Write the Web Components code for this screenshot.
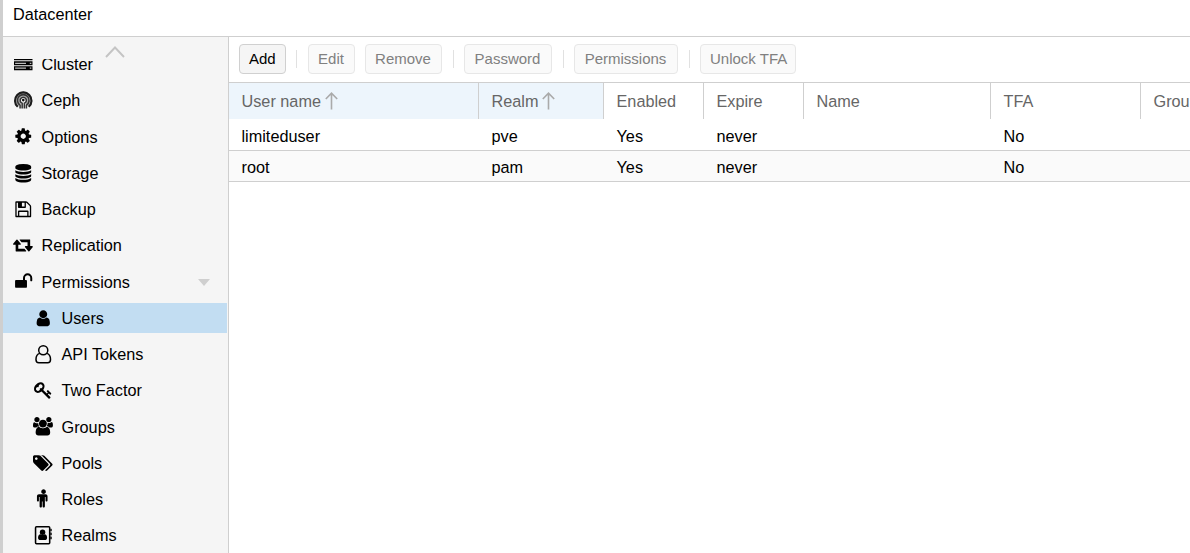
<!DOCTYPE html>
<html lang="en">
<head>
<meta charset="utf-8">
<title>Datacenter</title>
<style>
html,body{margin:0;height:100%;overflow:hidden;background:#fff}
body{font:16.25px "Liberation Sans",Arial,sans-serif;color:#000}
</style>
</head>
<body>
<dc-app></dc-app>
<script>
const ICONS = {
  server: [1792, '<path d="M0 120H1792V500H0ZM0 610H1792V990H0ZM0 1090H1792V1470H0Z"/><path fill="#bbb" d="M110 250H1160V370H110ZM110 740H1160V860H110ZM110 1220H1160V1340H110ZM1530 250H1680V370H1530ZM1530 740H1680V860H1530ZM1530 1220H1680V1340H1530Z"/>'],
  ceph: [1792, '<g transform="translate(0 -60)" fill="none"><path d="M380 1620A820 820 0 1 1 1412 1620" stroke="#aaa" stroke-width="700" transform="translate(224 224) scale(.75)"/><path d="M360 1590A800 800 0 1 1 1432 1590" stroke="#1c1c1c" stroke-width="200"/><path d="M590 1760V1440A560 560 0 1 1 1202 1440V1760" stroke="#333" stroke-width="150"/><path d="M790 1760V1250A300 300 0 1 1 1002 1250V1760" stroke="#333" stroke-width="150"/></g><circle cx="896" cy="880" r="130" fill="#111"/>'],
  cog: [1792, '<path d="M1152 896q0-106-75-181t-181-75-181 75-75 181 75 181 181 75 181-75 75-181zm512-109v222q0 12-8 23t-20 13l-185 28q-19 54-39 91 35 50 107 138 10 12 10 25t-9 23q-27 37-99 108t-94 71q-12 0-26-9l-138-108q-44 23-91 38-16 136-29 186-7 28-36 28h-222q-14 0-24.5-8.5t-11.5-21.5l-28-184q-49-16-90-37l-141 107q-10 9-25 9-14 0-25-11-126-114-165-168-7-10-7-23 0-12 8-23 15-21 51-66.5t54-70.5q-27-50-41-99l-183-27q-13-2-21-12.5t-8-23.5v-222q0-12 8-23t19-13l186-28q14-46 39-92-40-57-107-138-10-12-10-24 0-10 9-23 26-36 98.5-107.5t94.5-71.5q13 0 26 10l138 107q44-23 91-38 16-136 29-186 7-28 36-28h222q14 0 24.5 8.5t11.5 21.5l28 184q49 16 90 37l142-107q9-9 24-9 13 0 25 10 129 119 165 170 7 8 7 22 0 12-8 23-15 21-51 66.5t-54 70.5q26 50 41 98l183 28q13 2 21 12.5t8 23.5z"/>'],
  database: [1792, '<path d="M896 768q237 0 443-43t325-127v170q0 69-103 128t-280 93.5-385 34.5-385-34.5-280-93.5-103-128v-170q119 84 325 127t443 43zm0 768q237 0 443-43t325-127v170q0 69-103 128t-280 93.5-385 34.5-385-34.5-280-93.5-103-128v-170q119 84 325 127t443 43zm0-384q237 0 443-43t325-127v170q0 69-103 128t-280 93.5-385 34.5-385-34.5-280-93.5-103-128v-170q119 84 325 127t443 43zm0-1152q208 0 385 34.5t280 93.5 103 128v128q0 69-103 128t-280 93.5-385 34.5-385-34.5-280-93.5-103-128v-128q0-69 103-128t280-93.5 385-34.5z"/>'],
  floppy: [1792, '<path d="M512 1536h768v-384h-768v384zm896 0h128v-896q0-14-10-38.5t-20-34.5l-281-281q-10-10-34-20t-39-10v416q0 40-28 68t-68 28h-576q-40 0-68-28t-28-68v-416h-128v1280h128v-416q0-40 28-68t68-28h832q40 0 68 28t28 68v416zm-384-928v-320q0-13-9.5-22.5t-22.5-9.5h-192q-13 0-22.5 9.5t-9.5 22.5v320q0 13 9.5 22.5t22.5 9.5h192q13 0 22.5-9.5t9.5-22.5zm640 32v928q0 40-28 68t-68 28h-1344q-40 0-68-28t-28-68v-1344q0-40 28-68t68-28h928q40 0 88 20t76 48l280 280q28 28 48 76t20 88z"/>'],
  retweet: [1920, '<path transform="translate(64 -110)" d="M1216 1568q0 13-9.5 22.5t-22.5 9.5h-960q-8 0-13.5-2t-9-7-5.5-8-3-11.5-1-11.5v-600h-192q-26 0-45-19t-19-45q0-24 15-41l320-384q19-22 49-22t49 22l320 384q15 17 15 41 0 26-19 45t-45 19h-192v384h576q16 0 25 11l160 192q7 11 7 21zm640-416q0 24-15 41l-320 384q-20 23-49 23t-49-23l-320-384q-15-17-15-41 0-26 19-45t45-19h192v-384h-576q-16 0-25-12l-160-192q-7-9-7-20 0-13 9.5-22.5t22.5-9.5h960q8 0 13.5 2t9 7 5.5 8 3 11.5 1 11.5v600h192q26 0 45 19t19 45z"/>'],
  unlock: [1792, '<path transform="translate(40 0)" d="M1728 576v256q0 26-19 45t-45 19h-64q-26 0-45-19t-19-45v-256q0-106-75-181t-181-75-181 75-75 181v192h96q40 0 68 28t28 68v576q0 40-28 68t-68 28h-960q-40 0-68-28t-28-68v-576q0-40 28-68t68-28h672v-192q0-185 131.5-316.5t316.5-131.5 316.5 131.5 131.5 316.5z"/>'],
  user: [1792, '<path d="M1536 1399q0 109-62.5 187t-150.5 78h-854q-88 0-150.5-78t-62.5-187q0-85 8.5-160.5t31.5-152 58.5-131 94-89 134.5-34.5q131 128 313 128t313-128q76 0 134.5 34.5t94 89 58.5 131 31.5 152 8.5 160.5zm-256-887q0 159-112.5 271.5t-271.5 112.5-271.5-112.5-112.5-271.5 112.5-271.5 271.5-112.5 271.5 112.5 112.5 271.5z"/>'],
  userO: [1792, '<g fill="none" stroke="#000" stroke-width="145"><circle cx="896" cy="512" r="440"/><path d="M570 810Q192 890 192 1399Q192 1720 469 1720H1323Q1600 1720 1600 1399Q1600 890 1222 810"/></g>'],
  key: [1792, '<path d="M832 512q0-80-56-136t-136-56-136 56-56 136q0 42 19 83-41-19-83-19-80 0-136 56t-56 136 56 136 136 56 136-56 56-136q0-42-19-83 41 19 83 19 80 0 136-56t56-136zm851 704q0 17-49 66t-66 49q-9 0-28.5-16t-36.5-33-38.5-40-24.5-26l-96 96 220 220q28 28 28 68 0 42-39 81t-81 39q-40 0-68-28l-671-671q-176 131-365 131-163 0-265.5-102.5t-102.5-265.5q0-160 95-313t248-248 313-95q163 0 265.5 102.5t102.5 265.5q0 189-131 365l355 355 96-96q-3-3-26-24.5t-40-38.5-33-36.5-16-28.5q0-17 49-66t66-49q13 0 23 10 6 6 46 44.5t82 79.5 86.5 86 73 78 28.5 41z"/>'],
  users: [1920, '<path d="M593 896q-162 5-265 128h-134q-82 0-138-40.5t-56-118.5q0-353 124-353 6 0 43.5 21t97.5 42.5 119 21.5q67 0 133-23-5 37-5 66 0 159 93 283zm1071 637q0 120-73 189.5t-194 69.5h-874q-121 0-194-69.5t-73-189.5q0-53 3.5-103.5t14-109 26.5-108.5 43-97.5 62-81 85.5-53.5 111.5-20q10 0 43 21.5t73 48 107 48 135 21.5 135-21.5 107-48 73-48 43-21.5q61 0 111.5 20t85.5 53.5 62 81 43 97.5 26.5 108.5 14 109 3.5 103.5zm-1024-1277q0 106-75 181t-181 75-181-75-75-181 75-181 181-75 181 75 75 181zm704 384q0 159-112.5 271.5t-271.5 112.5-271.5-112.5-112.5-271.5 112.5-271.5 271.5-112.5 271.5 112.5 112.5 271.5zm576 225q0 78-56 118.5t-138 40.5h-134q-103-123-265-128 93-124 93-283 0-29-5-66 66 23 133 23 59 0 119-21.5t97.5-42.5 43.5-21q124 0 124 353zm-128-609q0 106-75 181t-181 75-181-75-75-181 75-181 181-75 181 75 75 181z"/>'],
  tags: [1920, '<path d="M448 448q0-53-37.5-90.5t-90.5-37.5-90.5 37.5-37.5 90.5 37.5 90.5 90.5 37.5 90.5-37.5 37.5-90.5zm1067 576q0 53-37 90l-491 492q-39 37-91 37-53 0-90-37l-715-716q-38-37-64.5-101t-26.5-117v-416q0-52 38-90t90-38h416q53 0 117 26.5t102 64.5l715 714q37 39 37 91zm384 0q0 53-37 90l-491 492q-39 37-91 37-36 0-59-14t-53-45l470-470q37-37 37-90 0-52-37-91l-715-714q-38-38-102-64.5t-117-26.5h224q53 0 117 26.5t102 64.5l715 714q37 39 37 91z"/>'],
  male: [1792, '<path transform="translate(30 0)" d="M1280 608v416q0 40-28 68t-68 28-68-28-28-68v-352h-64v912q0 46-33 79t-79 33-79-33-33-79v-464h-64v464q0 46-33 79t-79 33-79-33-33-79v-912h-64v352q0 40-28 68t-68 28-68-28-28-68v-416q0-80 56-136t136-56h640q80 0 136 56t56 136zm-160-448q0 93-65.5 158.5t-158.5 65.5-158.5-65.5-65.5-158.5 65.5-158.5 158.5-65.5 158.5 65.5 65.5 158.5z"/>'],
  book: [1792, '<rect x="150" y="74" width="1370" height="1644" rx="90" fill="none" stroke="#000" stroke-width="150"/><path d="M1580 256h96q40 0 40 32v192q0 32-40 32h-96zM1580 640h96q40 0 40 32v192q0 32-40 32h-96zM1580 1024h96q40 0 40 32v192q0 32-40 32h-96z"/><circle cx="830" cy="600" r="265"/><path d="M640 800Q730 880 830 880T1020 800Q1270 830 1270 1170Q1270 1344 1130 1344H530Q390 1344 390 1170Q390 830 640 800Z"/>']
};

class DcIcon extends HTMLElement {
  connectedCallback() {
    const [w, body] = ICONS[this.getAttribute('name')];
    this.attachShadow({mode: 'open'}).innerHTML = `
      <style>:host{display:flex;width:20px;height:18.5px;justify-content:center}
      svg{flex:none;overflow:visible}</style>
      <svg width="${w * 18.5 / 1792}" height="18.5" viewBox="0 0 ${w} 1792">${body}</svg>`;
  }
}
customElements.define('dc-icon', DcIcon);

class NavItem extends HTMLElement {
  connectedCallback() {
    this.attachShadow({mode: 'open'}).innerHTML = `
      <style>
      :host{display:flex;flex:none;align-items:center;height:30px;margin:3.125px 0;padding-left:10px;box-sizing:border-box;line-height:30px;white-space:nowrap}
      :host([sub]){padding-left:30px}
      :host([selected]){background:#c2ddf2;margin-right:1px}
      dc-icon{margin-right:8.5px}
      .label{flex:1}
      .caret{width:0;height:0;border:6.5px solid transparent;border-top:7px solid #cfcfcf;border-bottom:0;margin:1px 18.5px 0 0}
      </style>
      <dc-icon name="${this.getAttribute('icon')}"></dc-icon><span class="label"><slot></slot></span>
      ${this.hasAttribute('open') ? '<span class="caret"></span>' : ''}`;
  }
}
customElements.define('nav-item', NavItem);

class DcNav extends HTMLElement {
  connectedCallback() {
    this.attachShadow({mode: 'open'}).innerHTML = `
      <style>
      :host{display:flex;flex-direction:column;width:225px;flex:none;box-sizing:content-box;background:#f5f5f5;border-right:1px solid #cfcfcf;overflow:hidden}
      .up{height:22px;flex:none;background:#f5f5f5;display:flex;justify-content:center;align-items:center;z-index:1;position:relative}
      .up svg{margin:7px 1px 0 0}
      .list{display:flex;flex-direction:column;margin-top:-12.9px}
      </style>
      <div class="up"><svg width="20" height="12" viewBox="0 0 20 12"><path d="M1 11L10 1.5L19 11" fill="none" stroke="#c4c4c4" stroke-width="1.9"/></svg></div>
      <div class="list"><slot></slot></div>`;
  }
}
customElements.define('dc-nav', DcNav);

class DcButton extends HTMLElement {
  connectedCallback() {
    this.attachShadow({mode: 'open'}).innerHTML = `
      <style>
      :host{display:block;box-sizing:border-box;height:30px;border:1px solid #d0d0d0;border-radius:4px;background:#f5f5f5;padding:0 10px 0 9px;font-size:15px;line-height:28px;text-align:center;white-space:nowrap}
      :host([disabled]){color:#808080;border-color:#e7e7e7;background:#fafafa}
      </style><slot></slot>`;
  }
}
customElements.define('dc-button', DcButton);

class DcToolbar extends HTMLElement {
  connectedCallback() {
    this.attachShadow({mode: 'open'}).innerHTML = `
      <style>
      :host{display:flex;align-items:center;height:45px;box-sizing:border-box;padding:0 0 1px 10px}
      .sep{width:1px;height:18px;background:#e1e1e1;margin:0 10px 0 11px}
      .sep.first{margin:0 11px 0 10px}
      .gap{width:10px}
      </style>
      <dc-button style="width:47px">Add</dc-button><i class="sep first"></i>
      <dc-button disabled style="width:47px">Edit</dc-button><i class="gap"></i>
      <dc-button disabled style="width:77px">Remove</dc-button><i class="sep"></i>
      <dc-button disabled style="width:88px">Password</dc-button><i class="sep"></i>
      <dc-button disabled style="width:104px">Permissions</dc-button><i class="sep"></i>
      <dc-button disabled style="width:96px">Unlock TFA</dc-button>`;
  }
}
customElements.define('dc-toolbar', DcToolbar);

class UserGrid extends HTMLElement {
  connectedCallback() {
    const arrow = '<svg width="13" height="18" viewBox="0 0 13 18"><path d="M6.5 17.5V1.5M.8 7L6.5 1.2L12.2 7" fill="none" stroke="#aaa" stroke-width="1.6"/></svg>';
    const heads = ['User name', 'Realm', 'Enabled', 'Expire', 'Name', 'TFA', 'Groups'];
    const rows = [['limiteduser', 'pve', 'Yes', 'never', '', 'No', ''], ['root', 'pam', 'Yes', 'never', '', 'No', '']];
    this.attachShadow({mode: 'open'}).innerHTML = `
      <style>
      :host{display:block;border-top:1px solid #cfcfcf;overflow:hidden}
      .row{display:grid;grid-template-columns:250px 125px 100px 100px 187px 150px 150px;height:31px;box-sizing:border-box;border-bottom:1px solid #cfcfcf;line-height:30px}
      .row.alt{background:#fafafa}
      .row.head{height:36px;line-height:36px;border:0;color:#666;background:#fff;margin-bottom:1px}
      .row>div{padding-left:12.5px;box-sizing:border-box;white-space:nowrap}
      .row:not(.head)>div{padding-top:1px}
      .row.head>div{border-right:1px solid #cfcfcf;display:flex;align-items:center;gap:4px}
      .sorted{background:#edf5fc}
      svg{margin-top:-1px}
      </style>
      <div class="row head">${heads.map((h, i) => `<div class="${i < 2 ? 'sorted' : ''}">${h}${i < 2 ? arrow : ''}</div>`).join('')}</div>
      ${rows.map((r, n) => `<div class="row ${n % 2 ? 'alt' : ''}">${r.map(c => `<div>${c}</div>`).join('')}</div>`).join('')}`;
  }
}
customElements.define('user-grid', UserGrid);

class DcApp extends HTMLElement {
  connectedCallback() {
    this.attachShadow({mode: 'open'}).innerHTML = `
      <style>
      :host{display:flex;flex-direction:column;height:100vh;box-sizing:border-box;border-left:3px solid #cfcfcf;overflow:hidden}
      header{height:37px;flex:none;box-sizing:border-box;border-bottom:1px solid #cfcfcf;padding-left:10px;line-height:29px}
      main{display:flex;flex:1;min-height:0}
      section{flex:1;min-width:0}
      </style>
      <header>Datacenter</header>
      <main>
        <dc-nav>
          <nav-item icon="server">Cluster</nav-item>
          <nav-item icon="ceph">Ceph</nav-item>
          <nav-item icon="cog">Options</nav-item>
          <nav-item icon="database">Storage</nav-item>
          <nav-item icon="floppy">Backup</nav-item>
          <nav-item icon="retweet">Replication</nav-item>
          <nav-item icon="unlock" open>Permissions</nav-item>
          <nav-item icon="user" sub selected>Users</nav-item>
          <nav-item icon="userO" sub>API Tokens</nav-item>
          <nav-item icon="key" sub>Two Factor</nav-item>
          <nav-item icon="users" sub>Groups</nav-item>
          <nav-item icon="tags" sub>Pools</nav-item>
          <nav-item icon="male" sub>Roles</nav-item>
          <nav-item icon="book" sub>Realms</nav-item>
        </dc-nav>
        <section><dc-toolbar></dc-toolbar><user-grid></user-grid></section>
      </main>`;
  }
}
customElements.define('dc-app', DcApp);
</script>
</body>
</html>
